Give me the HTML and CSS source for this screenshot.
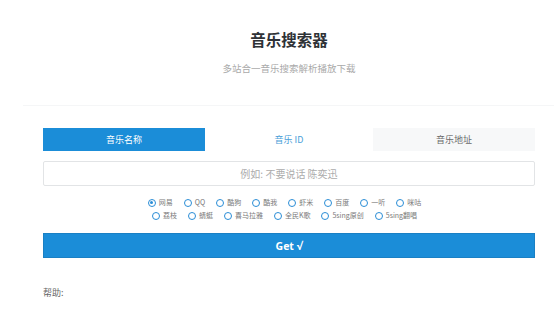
FILE: index.html
```html
<!DOCTYPE html>
<html lang="zh-CN">
<head>
<meta charset="utf-8">
<title>音乐搜索器</title>
<link rel="stylesheet" href="styles.css">
</head>
<body>
<header class="head">
  <h1 class="title">音乐搜索器</h1>
  <p class="subtitle">多站合一音乐搜索解析播放下载</p>
</header>
<main class="panel">
  <div class="inner">
    <div class="tabs">
      <div class="tab tab-active">音乐名称</div>
      <div class="tab tab-id">音乐 ID</div>
      <div class="tab tab-url">音乐地址</div>
    </div>
    <div class="search">例如: 不要说话 陈奕迅</div>
    <div class="sources">
      <div class="row">
        <span class="opt"><i class="radio on"></i>网易</span>
        <span class="opt"><i class="radio"></i>QQ</span>
        <span class="opt"><i class="radio"></i>酷狗</span>
        <span class="opt"><i class="radio"></i>酷我</span>
        <span class="opt"><i class="radio"></i>虾米</span>
        <span class="opt"><i class="radio"></i>百度</span>
        <span class="opt"><i class="radio"></i>一听</span>
        <span class="opt"><i class="radio"></i>咪咕</span>
      </div>
      <div class="row">
        <span class="opt"><i class="radio"></i>荔枝</span>
        <span class="opt"><i class="radio"></i>蜻蜓</span>
        <span class="opt"><i class="radio"></i>喜马拉雅</span>
        <span class="opt"><i class="radio"></i>全民K歌</span>
        <span class="opt"><i class="radio"></i>5sing原创</span>
        <span class="opt"><i class="radio"></i>5sing翻唱</span>
      </div>
    </div>
    <div class="btn">Get √</div>
    <div class="help">帮助:</div>
  </div>
</main>
</body>
</html>
```

FILE: styles.css
```css
* { box-sizing: border-box; }
html, body { margin: 0; padding: 0; background: #fff; }
body {
  font-family: "Noto Sans CJK SC", "Noto Sans", sans-serif;
  color: #333;
}
.head {
  width: 492px;
  margin-left: 43px;
  padding-top: 29px;
  text-align: center;
}
.title {
  margin: 0;
  font-size: 15.5px;
  line-height: 21px;
  font-weight: 700;
  color: #2e3236;
}
.subtitle {
  margin: 12px 0 0;
  font-size: 9.5px;
  line-height: 12px;
  color: #a9a9a9;
}
.panel {
  margin-top: 31px;
  margin-left: 23px;
  border-top: 1px solid #f5f6f7;
  padding: 22px 0 0 20px;
}
.inner { width: 492px; }
.tabs {
  display: grid;
  grid-template-columns: 1fr 1fr 1fr;
  column-gap: 3px;
  height: 23px;
}
.tab {
  display: flex;
  align-items: center;
  justify-content: center;
  font-size: 9px;
}
.tab-active { background: #1b8dd8; color: #fff; }
.tab-id { color: #4a9ed8; }
.tab-url { background: #f7f8f9; color: #6a6a6a; }
.search {
  margin-top: 10px;
  height: 25px;
  border: 1px solid #e2e4e6;
  border-radius: 2px;
  display: flex;
  align-items: center;
  justify-content: center;
  font-size: 10px;
  color: #acacac;
}
.sources { margin-top: 10px; }
.row {
  display: flex;
  justify-content: center;
  gap: 11px;
  padding-right: 9px;
  height: 13px;
  align-items: center;
}
.opt {
  display: inline-flex;
  align-items: center;
  font-size: 7px;
  line-height: 13px;
  color: #7a7a7a;
}
.radio {
  width: 8px;
  height: 8px;
  border: 1.5px solid #2a8dd6;
  border-radius: 50%;
  margin-right: 3px;
  display: inline-flex;
  align-items: center;
  justify-content: center;
}
.radio.on::after {
  content: "";
  width: 3px;
  height: 3px;
  border-radius: 50%;
  background: #2a8dd6;
}
.btn {
  margin-top: 11px;
  height: 25px;
  background: #1b8dd8;
  border: 1px solid #1a80c4;
  color: #fff;
  font-family: "Open Sans", "Noto Sans", sans-serif;
  font-weight: 700;
  font-size: 10.5px;
  display: flex;
  align-items: center;
  justify-content: center;
}
.help {
  margin-top: 28px;
  font-size: 9px;
  line-height: 14px;
  color: #666;
}
```
